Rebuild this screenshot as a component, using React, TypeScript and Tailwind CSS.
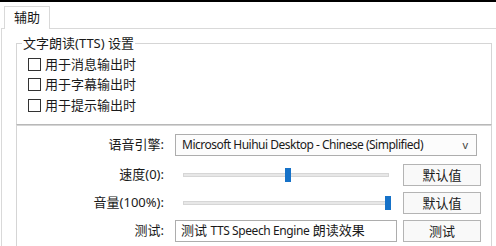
import { useState } from "react";

const font = "font-['Segoe_UI','Noto_Sans','Noto_Sans_CJK_SC',sans-serif]";

function CheckRow({ label }: { label: string }) {
  const [checked, setChecked] = useState(false);
  return (
    <label className="flex items-center h-[20.5px] pl-[11px] gap-[4px] cursor-default">
      <span
        className="w-[13px] h-[13px] border border-[#333] bg-white flex items-center justify-center"
        onClick={() => setChecked((c) => !c)}
      >
        {checked && <span className="w-[7px] h-[7px] bg-[#333]" />}
      </span>
      <span>{label}</span>
    </label>
  );
}

function Slider({ value }: { value: number }) {
  // value: 0..1, position of the thumb along the track
  return (
    <div className="relative w-[222px] h-[22px] flex items-center px-[8px]">
      <div className="w-full h-[4px] bg-[#e7e7e7] border border-[#d6d6d6]" />
      <div
        className="absolute top-[4px] w-[6px] h-[14px] bg-[#1672c8]"
        style={{ left: `${9 + value * 201}px` }}
      />
    </div>
  );
}

function Btn({ children }: { children: React.ReactNode }) {
  return (
    <button className="w-[78px] h-[22px] border border-[#b4b4b4] bg-[#f9f9f9] text-[13px] leading-none flex items-center justify-center">
      {children}
    </button>
  );
}

function Row({ label, children }: { label: string; children: React.ReactNode }) {
  return (
    <div className="flex items-center h-[22px]">
      <div className="w-[149px] text-right pr-[2px]">{label}</div>
      <div className="ml-[9px] flex items-center gap-[6px]">{children}</div>
    </div>
  );
}

export default function App() {
  return (
    <div className={`w-[496px] h-[246px] bg-white overflow-hidden border-t-2 border-black text-[13px] text-[#1a1a1a] ${font}`}>
      <div className="flex pl-[4px] pt-[4px]">
        <div className="relative z-10 -mb-px h-[23px] px-[9px] border border-b-0 border-[#d9d9d9] bg-white flex items-center">
          辅助
        </div>
      </div>
      <div className="ml-[1px] h-[220px] border-l border-t border-[#d9d9d9] pl-[14px] pt-[5px]">
        <fieldset className="w-[476px] h-[91px] border border-[#d5d5d5] border-b-[#b8b8b8] pt-[2px]">
          <legend className="ml-[5px] px-[1px] leading-[18px]">文字朗读(TTS) 设置</legend>
          <CheckRow label="用于消息输出时" />
          <CheckRow label="用于字幕输出时" />
          <CheckRow label="用于提示输出时" />
        </fieldset>
        <div className="w-[476px] h-[130px] border-l border-t border-r border-[#d5d5d5] pt-[8px] flex flex-col gap-[6px]">
          <Row label="语音引擎:">
            <div className="w-[302px] h-[22px] border border-[#adadad] bg-[#fcfcfc] flex items-center justify-between pl-[6px] pr-[8px] whitespace-nowrap">
              <span className="text-[12px] tracking-[-0.5px]">Microsoft Huihui Desktop - Chinese (Simplified)</span>
              <span className="text-[11px] text-[#444]">v</span>
            </div>
          </Row>
          <div className="mt-[2px]">
            <Row label="速度(0):">
              <Slider value={0.5} />
              <Btn>默认值</Btn>
            </Row>
          </div>
          <Row label="音量(100%):">
            <Slider value={1} />
            <Btn>默认值</Btn>
          </Row>
          <Row label="测试:">
            <div className="w-[222px] h-[22px] border border-[#adadad] bg-white flex items-center pl-[5px] whitespace-nowrap">
              <span>测试 <span className="text-[12px] tracking-[-0.4px]">TTS Speech Engine</span> 朗读效果</span>
            </div>
            <Btn>测试</Btn>
          </Row>
        </div>
      </div>
    </div>
  );
}
